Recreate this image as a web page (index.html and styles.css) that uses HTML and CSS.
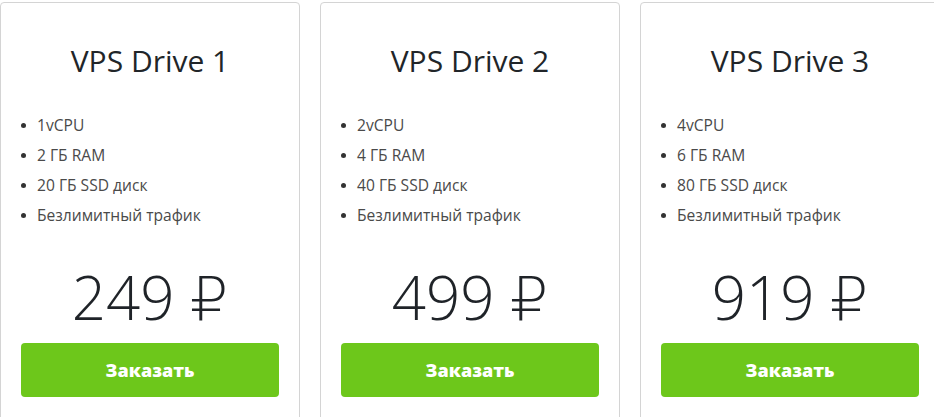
FILE: index.html
```html
<!DOCTYPE html>
<html lang="ru">
<head>
  <meta charset="UTF-8">
  <meta name="viewport" content="width=device-width, initial-scale=1.0">
  <title>VPS Drive</title>
  <link rel="stylesheet" href="styles.css">
</head>
<body>
  <div class="plans">
    <div class="plan">
      <h2 class="plan-title">VPS Drive 1</h2>
      <ul class="plan-features">
        <li>1vCPU</li>
        <li>2 ГБ RAM</li>
        <li>20 ГБ SSD диск</li>
        <li>Безлимитный трафик</li>
      </ul>
      <div class="plan-price">249 ₽</div>
      <button class="btn-order">Заказать</button>
    </div>

    <div class="plan">
      <h2 class="plan-title">VPS Drive 2</h2>
      <ul class="plan-features">
        <li>2vCPU</li>
        <li>4 ГБ RAM</li>
        <li>40 ГБ SSD диск</li>
        <li>Безлимитный трафик</li>
      </ul>
      <div class="plan-price">499 ₽</div>
      <button class="btn-order">Заказать</button>
    </div>

    <div class="plan">
      <h2 class="plan-title">VPS Drive 3</h2>
      <ul class="plan-features">
        <li>4vCPU</li>
        <li>6 ГБ RAM</li>
        <li>80 ГБ SSD диск</li>
        <li>Безлимитный трафик</li>
      </ul>
      <div class="plan-price">919 ₽</div>
      <button class="btn-order">Заказать</button>
    </div>
  </div>
</body>
</html>
```

FILE: styles.css
```css
/* page */
html, body {
  overflow: hidden;
}

body {
  margin: 0;
  padding-top: 2px;
  background: #fff;
  font-family: "Open Sans", "DejaVu Sans", sans-serif;
  color: #212529;
}

/* plan cards */
.plans {
  display: flex;
  gap: 20px;
}

.plan {
  flex: 0 0 300px;
  box-sizing: border-box;
  border: 1px solid #d4d4d4;
  border-radius: 4px;
  padding: 38px 20px 40px;
  display: flex;
  flex-direction: column;
}

.plan-title {
  margin: 0;
  font-size: 30px;
  font-weight: 400;
  line-height: 40px;
  text-align: center;
  color: #212529;
}

/* features */
.plan-features {
  list-style: none;
  margin: 29px 0 0;
  padding: 0;
}

.plan-features li {
  display: flex;
  align-items: center;
  height: 30px;
  font-size: 15.6px;
  color: #4a4a4a;
}

.plan-features li::before {
  content: "";
  width: 5px;
  height: 5px;
  border-radius: 50%;
  background: #333;
  margin-right: 11px;
}

/* price */
.plan-price {
  margin-top: 32px;
  font-size: 60px;
  font-weight: 300;
  line-height: 70px;
  text-align: center;
  color: #1f2328;
}

/* order button */
.btn-order {
  margin-top: 11px;
  height: 54px;
  border: none;
  border-radius: 4px;
  background-color: #6dc71b;
  color: #fff;
  font-family: "Open Sans", sans-serif;
  font-size: 18px;
  font-weight: 800;
  cursor: pointer;
}
```
